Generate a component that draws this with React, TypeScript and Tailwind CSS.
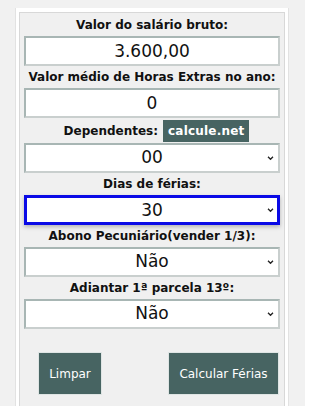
import React from 'react'

const font = { fontFamily: '"DejaVu Sans", Verdana, sans-serif' }

function Chevron() {
  return (
    <svg
      className="pointer-events-none absolute right-[6px] top-1/2 -translate-y-1/2"
      width="7"
      height="5"
      viewBox="0 0 7 5"
    >
      <path d="M1 1.2 L3.5 3.8 L6 1.2" fill="none" stroke="#222" strokeWidth="1.3" />
    </svg>
  )
}

function Label({ children }: { children: React.ReactNode }) {
  return (
    <div className="py-[3px] text-center text-[12px] leading-[16px] font-bold text-[#111]">
      {children}
    </div>
  )
}

function TextBox({ value }: { value: string }) {
  return (
    <input
      readOnly
      value={value}
      className="block h-[30px] w-full border-2 border-[#a8b6b4] border-b-[#c9cfce] border-r-[#c9cfce] bg-white text-center text-[17px] text-[#111] outline-none"
      style={font}
    />
  )
}

function Dropdown({ value, focused }: { value: string; focused?: boolean }) {
  return (
    <div className="relative">
      <select
        value={value}
        onChange={() => {}}
        className={
          focused
            ? 'block h-[30px] w-full appearance-none border-[3px] border-[#0a0ae6] bg-white text-[17px] text-[#111] shadow-[0_2px_4px_rgba(0,0,0,0.25)] outline-none [text-align-last:center]'
            : 'block h-[30px] w-full appearance-none border-2 border-[#a8b6b4] border-b-[#c9cfce] border-r-[#c9cfce] bg-white text-[17px] text-[#111] outline-none [text-align-last:center]'
        }
        style={font}
      >
        <option value={value}>{value}</option>
      </select>
      <Chevron />
    </div>
  )
}

export default function App() {
  return (
    <div className="h-[406px] w-[305px] overflow-hidden bg-[#f1f1f1] pt-[8px] pl-[15px]" style={font}>
      <div className="h-[420px] w-[274px] border-x border-[#e2e2e2] bg-white px-[3px] pt-[4px]">
        <div className="h-full border border-[#d8d8d8] bg-[#f0f0f0] px-[4px] pt-[1px]">
          <Label>Valor do salário bruto:</Label>
          <TextBox value="3.600,00" />
          <Label>Valor médio de Horas Extras no ano:</Label>
          <TextBox value="0" />
          <div className="flex h-[25px] items-center justify-center gap-[5px] pt-[2px] pb-[1px]">
            <span className="pl-[9px] text-[12px] leading-[16px] font-bold text-[#111]">Dependentes:</span>
            <span className="flex h-[22px] items-center bg-[#476462] px-[5px] text-[12px] font-bold tracking-[0.2px] text-white">
              calcule.net
            </span>
          </div>
          <Dropdown value="00" />
          <Label>Dias de férias:</Label>
          <Dropdown value="30" focused />
          <Label>Abono Pecuniário(vender 1/3):</Label>
          <Dropdown value="Não" />
          <Label>Adiantar 1ª parcela 13º:</Label>
          <Dropdown value="Não" />
          <div className="mt-[23px] flex justify-between pl-[14px] pr-[1px]">
            <button className="h-[43px] w-[64px] border border-[#dfe5e4] bg-[#476462] text-[12px] text-white">
              Limpar
            </button>
            <button className="h-[43px] w-[111px] border border-[#dfe5e4] bg-[#476462] text-[12px] text-white">
              Calcular Férias
            </button>
          </div>
        </div>
      </div>
    </div>
  )
}
